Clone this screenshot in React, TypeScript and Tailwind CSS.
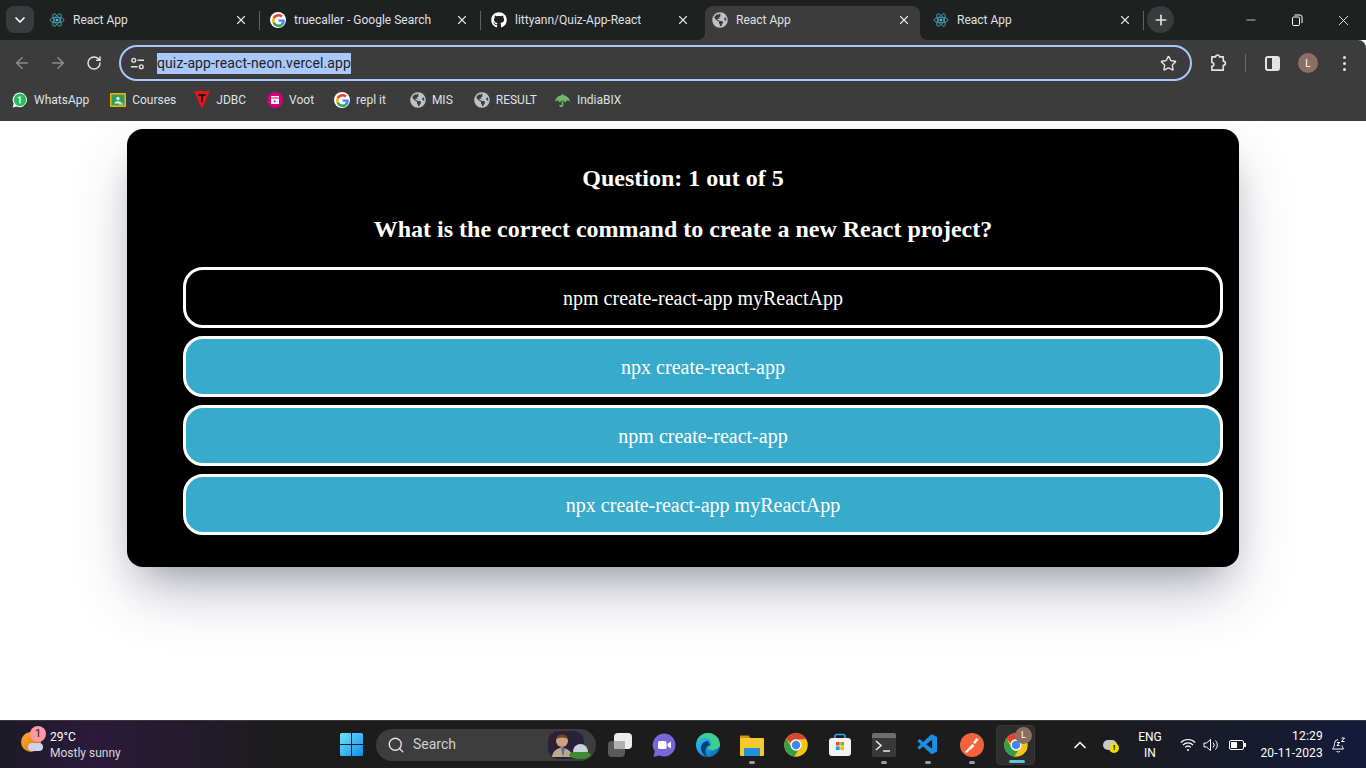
import React from 'react';
import { ArrowLeft, ArrowRight, RotateCw, Star, X, Plus, Minus, ChevronDown, ChevronUp, Search } from 'lucide-react';
import { FaGithub, FaGlobeAmericas, FaUmbrella } from 'react-icons/fa';
import { VscVscode } from 'react-icons/vsc';

const options = [
  { label: 'npm create-react-app myReactApp', picked: true },
  { label: 'npx create-react-app', picked: false },
  { label: 'npm create-react-app', picked: false },
  { label: 'npx create-react-app myReactApp', picked: false },
];

const ReactIcon = () => (
  <svg viewBox="-12 -12 24 24" className="w-4 h-4 shrink-0" fill="none" stroke="#4fb8d4" strokeWidth="1.1">
    <circle r="2.2" fill="#4fb8d4" stroke="none" />
    <ellipse rx="10.5" ry="4.2" />
    <ellipse rx="10.5" ry="4.2" transform="rotate(60)" />
    <ellipse rx="10.5" ry="4.2" transform="rotate(120)" />
  </svg>
);

const GoogleIcon = () => (
  <span className="w-4 h-4 shrink-0 rounded-full bg-white flex items-center justify-center">
    <svg viewBox="0 0 48 48" className="w-[13px] h-[13px]">
      <path fill="#EA4335" d="M24 9.5c3.54 0 6.71 1.22 9.21 3.6l6.85-6.85C35.9 2.38 30.47 0 24 0 14.62 0 6.51 5.38 2.56 13.22l7.98 6.19C12.43 13.72 17.74 9.5 24 9.5z" />
      <path fill="#4285F4" d="M46.98 24.55c0-1.57-.15-3.09-.38-4.55H24v9.02h12.94c-.58 2.96-2.26 5.48-4.78 7.18l7.73 6c4.51-4.18 7.09-10.36 7.09-17.65z" />
      <path fill="#FBBC05" d="M10.53 28.59c-.48-1.45-.76-2.99-.76-4.59s.27-3.14.76-4.59l-7.98-6.19C.92 16.46 0 20.12 0 24c0 3.88.92 7.54 2.56 10.78l7.97-6.19z" />
      <path fill="#34A853" d="M24 48c6.48 0 11.93-2.13 15.89-5.81l-7.73-6c-2.15 1.45-4.92 2.3-8.16 2.3-6.26 0-11.57-4.22-13.47-9.91l-7.98 6.19C6.51 42.62 14.62 48 24 48z" />
    </svg>
  </span>
);

const Globe = () => <FaGlobeAmericas className="w-4 h-4 shrink-0 text-[#bdc1c6]" />;

const ChromeIcon = ({ size = 'w-6 h-6' }: { size?: string }) => (
  <svg viewBox="0 0 48 48" className={size}>
    <circle cx="24" cy="24" r="23.5" fill="#f5c518" />
    <path fill="#dc4437" d="M24 .5a23.500 23.500 0 0 1 20.400 11.750H24a11.750 11.750 0 0 0-11 7.500L4.600 10.800A23.500 23.500 0 0 1 24 .5z" />
    <path fill="#2f9e4f" d="M4.600 10.800L14 27.500a11.750 11.750 0 0 0 14.500 7.700L20.500 47.200A23.500 23.500 0 0 1 4.600 10.800z" />
    <circle cx="24" cy="24" r="11" fill="#fff" />
    <circle cx="24" cy="24" r="8.500" fill="#4285f4" />
  </svg>
);

const Tab = ({ icon, title, active, sep }: { icon: React.ReactNode; title: string; active?: boolean; sep?: boolean }) => (
  <div className={`relative w-[215px] h-[34px] mr-[6px] pl-[7px] pr-[9px] pb-[6px] flex items-center rounded-t-lg ${active ? 'bg-[#3c3c3c]' : ''}`}>
    {active && <span className="absolute bottom-0 -left-2 w-2 h-2 bg-[radial-gradient(circle_at_0_0,transparent_8px,#3c3c3c_8px)]" />}
    {active && <span className="absolute bottom-0 -right-2 w-2 h-2 bg-[radial-gradient(circle_at_100%_0,transparent_8px,#3c3c3c_8px)]" />}
    {icon}
    <span className="ml-2 text-xs text-[#dfe1e5] truncate">{title}</span>
    <X className="ml-auto w-[14px] h-[14px] text-[#dfe1e5]" strokeWidth={2} />
    {sep && <span className="absolute -right-[3px] top-[5px] h-[19px] w-px bg-[#5f6368]" />}
  </div>
);

const Bookmark = ({ icon, label, className }: { icon: React.ReactNode; label: string; className: string }) => (
  <div className={`flex items-center gap-[6px] ${className}`}>
    <span className="w-4 h-4 flex items-center justify-center shrink-0">{icon}</span>
    <span className="text-xs text-[#dfe1e5]">{label}</span>
  </div>
);

const TaskIcon = ({ children, dot }: { children: React.ReactNode; dot?: boolean }) => (
  <div className="relative w-11 h-12 flex items-center justify-center">
    {children}
    {dot && <span className="absolute bottom-[5px] left-[19px] w-[6px] h-[3px] rounded-full bg-[#9a9a9a]" />}
  </div>
);

export default function App() {
  return (
    <div className="h-screen flex flex-col overflow-hidden bg-white font-['Roboto',sans-serif]">
      {/* tab strip */}
      <div className="h-10 shrink-0 bg-[#1f2020] pt-[6px] pl-[6px] flex items-start">
        <div className="w-7 h-[27px] mr-2 rounded-lg bg-[#3a3b3c] flex items-center justify-center">
          <ChevronDown className="w-4 h-4 text-white" strokeWidth={2.5} />
        </div>
        <Tab icon={<ReactIcon />} title="React App" sep />
        <Tab icon={<GoogleIcon />} title="truecaller - Google Search" sep />
        <Tab icon={<FaGithub className="w-4 h-4 shrink-0 text-white" />} title="littyann/Quiz-App-React" />
        <Tab icon={<Globe />} title="React App" active />
        <Tab icon={<ReactIcon />} title="React App" sep />
        <div className="w-[27px] h-[27px] rounded-full bg-[#3a3b3c] flex items-center justify-center">
          <Plus className="w-4 h-4 text-[#e3e3e3]" strokeWidth={2.5} />
        </div>
        <div className="ml-auto -mt-[6px] h-10 flex">
          <div className="w-[46px] flex items-center justify-center"><Minus className="w-[14px] h-[14px] text-white" strokeWidth={1.2} /></div>
          <div className="w-[46px] flex items-center justify-center">
            <svg viewBox="0 0 12 12" className="w-3 h-3" fill="none" stroke="#fff" strokeWidth="1">
              <rect x="1.500" y="3" width="7" height="8.500" rx="1.200" />
              <path d="M3.500 1h5.500a2 2 0 0 1 2 2v6" />
            </svg>
          </div>
          <div className="w-[46px] flex items-center justify-center"><X className="w-[17px] h-[17px] text-white" strokeWidth={1.2} /></div>
        </div>
      </div>

      {/* toolbar */}
      <div className="h-[48px] shrink-0 bg-[#3c3c3c] rounded-tr-lg pt-[5px] pl-1 flex items-start">
        <div className="w-9 h-9 flex items-center justify-center"><ArrowLeft className="w-[18px] h-[18px] text-[#8b8c8c]" /></div>
        <div className="w-9 h-9 flex items-center justify-center"><ArrowRight className="w-[18px] h-[18px] text-[#8b8c8c]" /></div>
        <div className="w-9 h-9 flex items-center justify-center"><RotateCw className="w-4 h-4 text-[#e3e3e3]" strokeWidth={2.2} /></div>
        <div className="ml-[7px] w-[1073px] h-9 rounded-full border-2 border-[#a8c7fa] flex items-center pl-[9px] pr-[13px]">
          <svg viewBox="0 0 16 16" className="w-[15px] h-[15px]" fill="none" stroke="#e3e3e3" strokeWidth="1.500">
            <circle cx="4" cy="4.500" r="2" />
            <path d="M8 4.500h7M1 11.500h7" />
            <circle cx="12" cy="11.500" r="2" />
          </svg>
          <span className="ml-[12px] bg-[#a8c7fa] text-[#1f1f1f] text-sm leading-[21px] tracking-[0.1px]">quiz-app-react-neon.vercel.app</span>
          <Star className="ml-auto w-[17px] h-[17px] text-[#e3e3e3]" strokeWidth={2} />
        </div>
        <div className="ml-2 w-9 h-9 flex items-center justify-center">
          <svg viewBox="0 0 20 20" className="w-[19px] h-[19px]" fill="none" stroke="#e3e3e3" strokeWidth="1.7">
            <path d="M3 3h4a2 2 0 0 1 4 0h4v4.500a2 2 0 0 1 0 4.500V17H3v-4a2 2 0 0 0 0-4V3z" strokeLinejoin="round" />
          </svg>
        </div>
        <span className="ml-[9px] mt-[9px] w-px h-[18px] bg-[#6a6a6a]" />
        <div className="ml-2 w-9 h-9 flex items-center justify-center">
          <span className="w-[15px] h-[15px] rounded-[3px] border-2 border-[#e3e3e3] flex justify-end"><span className="w-[6px] bg-[#e3e3e3]" /></span>
        </div>
        <div className="w-9 h-9 flex items-center justify-center">
          <span className="w-5 h-5 rounded-full bg-[#8d6e63] text-white text-[10px] flex items-center justify-center">L</span>
        </div>
        <div className="w-9 h-9 flex flex-col items-center justify-center gap-[3px]">
          <span className="w-[3px] h-[3px] rounded-full bg-[#e3e3e3]" />
          <span className="w-[3px] h-[3px] rounded-full bg-[#e3e3e3]" />
          <span className="w-[3px] h-[3px] rounded-full bg-[#e3e3e3]" />
        </div>
      </div>

      {/* bookmarks */}
      <div className="h-[33px] shrink-0 bg-[#3c3c3c] pl-3 flex items-center pb-[9px]">
        <Bookmark
          label="WhatsApp"
          className=""
          icon={
            <svg viewBox="0 0 16 16" className="w-4 h-4">
              <path d="M8 .5a7.300 7.300 0 0 0-6.300 11L.6 15.400l4-1A7.300 7.300 0 1 0 8 .5z" fill="#fff" />
              <circle cx="8" cy="7.800" r="6.300" fill="#25c05a" />
              <path d="M8.600 4.200v7.200H7.200V5.800l-1.400.6V5.200l2.400-1z" fill="#fff" />
            </svg>
          }
        />
        <Bookmark
          label="Courses"
          className="ml-[21px]"
          icon={
            <svg viewBox="0 0 16 14" className="w-4 h-[14px]">
              <rect width="16" height="14" rx="1" fill="#f4b400" />
              <rect x="1.500" y="1.500" width="13" height="11" fill="#2e9e5b" />
              <circle cx="8" cy="5.500" r="1.700" fill="#f1f3e0" />
              <path d="M4.500 10.500c0-3 7-3 7 0z" fill="#f1f3e0" />
              <rect x="9" y="10.500" width="4" height="1" fill="#f1f3e0" />
            </svg>
          }
        />
        <Bookmark
          label="JDBC"
          className="ml-[18px]"
          icon={
            <svg viewBox="0 0 16 18" className="w-4 h-[18px] shrink-0">
              <path d="M0 0h16L8 18z" fill="#e8131b" />
              <path d="M4.500 3h7v2H9v6H7V5H4.500z" fill="#1a1a1a" />
            </svg>
          }
        />
        <Bookmark
          label="Voot"
          className="ml-[21px]"
          icon={
            <svg viewBox="0 0 16 16" className="w-4 h-4">
              <circle cx="8" cy="8" r="8" fill="#d6007f" />
              <path d="M4 6.500h8V12H4zM4 4h8v1.500H4z" fill="#fff" />
              <path d="M6.800 8l2.600 1.300-2.600 1.300z" fill="#d6007f" />
            </svg>
          }
        />
        <Bookmark label="repl it" className="ml-[20px]" icon={<GoogleIcon />} />
        <Bookmark label="MIS" className="ml-[24px]" icon={<Globe />} />
        <Bookmark label="RESULT" className="ml-[21px]" icon={<Globe />} />
        <Bookmark label="IndiaBIX" className="ml-[18px]" icon={<FaUmbrella className="w-[15px] h-[15px] text-[#6fb86a]" />} />
      </div>

      {/* page */}
      <main className="flex-1 min-h-0 pt-2">
        <div className="mx-auto w-[1112px] h-[438px] bg-black rounded-2xl pt-[35px] shadow-[0_30px_60px_-8px_rgba(50,50,93,0.3),0_18px_36px_-18px_rgba(0,0,0,0.3)] font-['Liberation_Serif',serif] text-white">
          <h2 className="text-2xl font-bold text-center leading-7">Question: 1 out of 5</h2>
          <h2 className="mt-[23px] text-2xl font-bold text-center leading-7">What is the correct command to create a new React project?</h2>
          <ul className="mt-6 ml-14 mr-4 flex flex-col gap-2">
            {options.map((o) => (
              <li
                key={o.label}
                className={`h-[61px] rounded-[20px] border-[3px] border-white flex items-center justify-center text-xl ${o.picked ? 'bg-black' : 'bg-[#38abcc]'}`}
              >
                {o.label}
              </li>
            ))}
          </ul>
        </div>
      </main>

      {/* taskbar */}
      <footer className="h-12 shrink-0 flex items-center text-white bg-[linear-gradient(90deg,#1d1a26_0,#2a1a3c_90px,#1c1c1c_280px,#1c1c1c_1080px,#141a3a_100%)] border-t border-[#3a3a3a]">
        <div className="relative w-[329px] h-full flex items-center pl-[50px]">
          <span className="absolute left-[21px] top-[11px] w-5 h-5 rounded-full bg-[linear-gradient(135deg,#f8b32a,#e8680f)]" />
          <span className="absolute left-[28px] top-[22px] w-[15px] h-[8px] rounded-full bg-[#c7d6ea]" />
          <span className="absolute left-[30px] top-[5px] w-4 h-4 rounded-full bg-[#ff99a4] text-[#1c1c1c] text-[11px] leading-4 text-center">1</span>
          <div className="text-xs leading-4">
            <div>29°C</div>
            <div className="text-[#d8d8d8]">Mostly sunny</div>
          </div>
        </div>
        <div className="w-11 flex items-center justify-center">
          <svg viewBox="0 0 23 23" className="w-[23px] h-[23px]">
            <defs>
              <linearGradient id="win" x1="0" y1="0" x2="1" y2="1">
                <stop offset="0" stopColor="#6fe3fb" />
                <stop offset="1" stopColor="#0f8fe8" />
              </linearGradient>
            </defs>
            <path fill="url(#win)" d="M0 1.500A1.500 1.500 0 0 1 1.500 0H11v11H0zM12 0h9.500A1.500 1.500 0 0 1 23 1.500V11H12zM0 12h11v11H1.500A1.500 1.500 0 0 1 0 21.500zM12 12h11v9.500a1.500 1.500 0 0 1-1.500 1.500H12z" />
          </svg>
        </div>
        <div className="ml-[3px] w-[220px] h-8 rounded-full bg-[#3d3d3d] flex items-center pl-[11px] relative overflow-hidden">
          <Search className="w-[18px] h-[18px] text-[#e0e0e0]" strokeWidth={1.8} />
          <span className="ml-[8px] text-sm leading-[18px] pb-[2px] text-[#d0d0d0]">Search</span>
          <svg viewBox="0 0 50 32" className="ml-auto mr-0 w-[50px] h-8">
            <rect x="2" y="2" width="36" height="28" rx="10" fill="#2a2038" />
            <path d="M6 28c1-7 5-8 10-10 5 2 9 3 11 10z" fill="#bba98a" />
            <path d="M15 19l2 9 2-9z" fill="#4d6fa8" />
            <circle cx="16" cy="12" r="6" fill="#d0a07c" />
            <path d="M10 10c1-6 11-6 12 0-4-2-8-2-12 0z" fill="#6b4a2c" />
            <ellipse cx="34" cy="26" rx="11" ry="4" fill="#3f8a34" />
            <path d="M27 23a7.500 8 0 0 1 15 0z" fill="#c8d4dc" />
          </svg>
        </div>
        <div className="ml-[2px] flex">
          <TaskIcon>
            <span className="relative w-6 h-6">
              <span className="absolute left-0 bottom-0 w-[17px] h-[16px] rounded-sm bg-[#5a5a5a]" />
              <span className="absolute right-0 top-0 w-[18px] h-[16px] rounded-sm bg-[#ececec]" />
              <span className="absolute left-[6px] top-[8px] w-[11px] h-[8px] bg-[#b0b0b0]" />
            </span>
          </TaskIcon>
          <TaskIcon>
            <svg viewBox="0 0 24 24" className="w-6 h-6">
              <path d="M12 0.500a11.500 11.500 0 1 1-4.500 22.100L1.500 24l1.300-5.500A11.500 11.500 0 0 1 12 .5z" fill="#7a66d8" />
              <rect x="6" y="8" width="8.500" height="8" rx="1.500" fill="#fff" />
              <path d="M15.500 11l3.500-2.500v7L15.500 13z" fill="#fff" />
            </svg>
          </TaskIcon>
          <TaskIcon>
            <svg viewBox="0 0 24 24" className="w-6 h-6">
              <defs>
                <linearGradient id="edge" x1="0" y1="0" x2="1" y2="1">
                  <stop offset="0" stopColor="#35c1f1" />
                  <stop offset="0.55" stopColor="#1b9de2" />
                  <stop offset="1" stopColor="#0c59a4" />
                </linearGradient>
              </defs>
              <circle cx="12" cy="12" r="12" fill="url(#edge)" />
              <path d="M24 12c0-6-5-12-12-12C7 0 3 3 1 8c3-3 7-4 10-3 4 1.500 5 5 4 7.500-1 1.500-3 1.500-4 1 1 3 4 4.500 7 3.500 3-1 6-3 6-5z" fill="#3fcf8e" />
              <path d="M12 8c-4 0-7 3-7 7 0 4 3 8 7 9-2-2-3-5-2-8 .5-2 2-3.500 4-4z" fill="#0b3f7d" />
            </svg>
          </TaskIcon>
          <TaskIcon dot>
            <svg viewBox="0 0 24 24" className="w-6 h-6">
              <path d="M0 2.500h8.500l2.500 3H0z" fill="#c79a17" />
              <rect x="0" y="5" width="24" height="18" rx="1" fill="#f7c92f" />
              <rect x="4" y="15" width="16" height="8" rx="1" fill="#1f8fd6" />
            </svg>
          </TaskIcon>
          <TaskIcon><ChromeIcon /></TaskIcon>
          <TaskIcon>
            <svg viewBox="0 0 24 24" className="w-6 h-6">
              <path d="M7 6V3.500a2 2 0 0 1 2-2h6a2 2 0 0 1 2 2V6" fill="none" stroke="#2aa7e8" strokeWidth="1.600" />
              <rect x="1" y="5" width="22" height="18" rx="3" fill="#f3f3f3" />
              <rect x="8" y="9" width="3.600" height="3.600" fill="#f25022" />
              <rect x="12.400" y="9" width="3.600" height="3.600" fill="#7fba00" />
              <rect x="8" y="13.400" width="3.600" height="3.600" fill="#00a4ef" />
              <rect x="12.400" y="13.400" width="3.600" height="3.600" fill="#ffb900" />
            </svg>
          </TaskIcon>
          <TaskIcon dot>
            <span className="w-6 h-6 rounded-[2px] bg-[#383838] overflow-hidden flex flex-col">
              <span className="h-[5px] bg-[#6e6e6e]" />
              <svg viewBox="0 0 24 19" className="w-6 h-[19px]" fill="none" stroke="#e8e8e8" strokeWidth="1.600">
                <path d="M4 3l5 4.500-5 4.500M11 13h7" />
              </svg>
            </span>
          </TaskIcon>
          <TaskIcon dot><VscVscode className="w-6 h-6 text-[#1b8fe0]" /></TaskIcon>
          <TaskIcon dot>
            <svg viewBox="0 0 24 24" className="w-6 h-6">
              <circle cx="12" cy="12" r="12" fill="#f4633a" />
              <path d="M5 19l7.500-8 2 2L6.500 20zM13 9.500l3.500-4.500 2 1.500-3.500 4.500z" fill="#fff" />
            </svg>
          </TaskIcon>
          <div className="relative w-[39px] h-10 ml-[2px] mr-[3px] mt-1 rounded bg-[#2e2e2e] border border-[#383838] flex items-center justify-center">
            <ChromeIcon />
            <span className="absolute right-[2px] top-[1px] w-[17px] h-[17px] rounded-full bg-[#8d6e63] text-[9px] leading-[17px] text-center">L</span>
            <span className="absolute bottom-[1px] left-[12px] w-4 h-[3px] rounded-full bg-[#60c5dc]" />
          </div>
        </div>
        <div className="ml-[28px] w-7 flex justify-center"><ChevronUp className="w-5 h-5 text-white" strokeWidth={2} /></div>
        <div className="relative w-8 flex justify-center">
          <span className="w-[14px] h-[10px] rounded-full bg-[#c8c8c8]" />
          <span className="absolute left-[15px] top-[3px] w-[10px] h-[10px] rounded-full bg-[#f5d90a] text-[8px] leading-[10px] text-black text-center font-bold">!</span>
        </div>
        <div className="w-12 text-center text-xs leading-[16px]">
          <div>ENG</div>
          <div>IN</div>
        </div>
        <div className="w-7 flex justify-center">
          <svg viewBox="0 0 16 14" className="w-4 h-[14px]" fill="none" stroke="#fff" strokeWidth="1.200">
            <path d="M.8 4.500a10.200 10.200 0 0 1 14.400 0M3 7a7 7 0 0 1 10 0M5.200 9.300a3.900 3.900 0 0 1 5.600 0" />
            <circle cx="8" cy="12" r="1" fill="#fff" stroke="none" />
          </svg>
        </div>
        <div className="w-[18px] flex justify-center">
          <svg viewBox="0 0 17 14" className="w-[17px] h-[14px]" fill="none" stroke="#fff" strokeWidth="1">
            <path d="M1 5h2.500L7.500 1.500v11L3.500 9H1z" strokeLinejoin="round" />
            <path d="M10 4.500a3.500 3.500 0 0 1 0 5M12.500 2.500a6.500 6.500 0 0 1 0 9" />
          </svg>
        </div>
        <div className="w-8 flex justify-center">
          <span className="relative w-[15px] h-[10px] rounded-[2px] border border-white flex p-[1px]">
            <span className="w-[6px] bg-white" />
            <span className="absolute -right-[3px] top-[2px] w-[2px] h-1 bg-white" />
          </span>
        </div>
        <div className="w-[71px] text-right text-xs leading-[17px] tracking-[0.2px]">
          <div>12:29</div>
          <div>20-11-2023</div>
        </div>
        <div className="w-8 flex justify-center">
          <svg viewBox="0 0 16 16" className="w-4 h-4" fill="none" stroke="#fff" strokeWidth="1">
            <path d="M7 2.500a4 4 0 0 0-3.500 4c0 4-2 5-2 5.500h11c0-.5-1.200-1.500-1.500-3.500" strokeLinejoin="round" />
            <path d="M5.500 14a2 2 0 0 0 3.500 0M6 5.500h2.500L6 8.500h2.500M10.500 1h3l-3 3.500h3" />
          </svg>
        </div>
      </footer>
    </div>
  );
}
